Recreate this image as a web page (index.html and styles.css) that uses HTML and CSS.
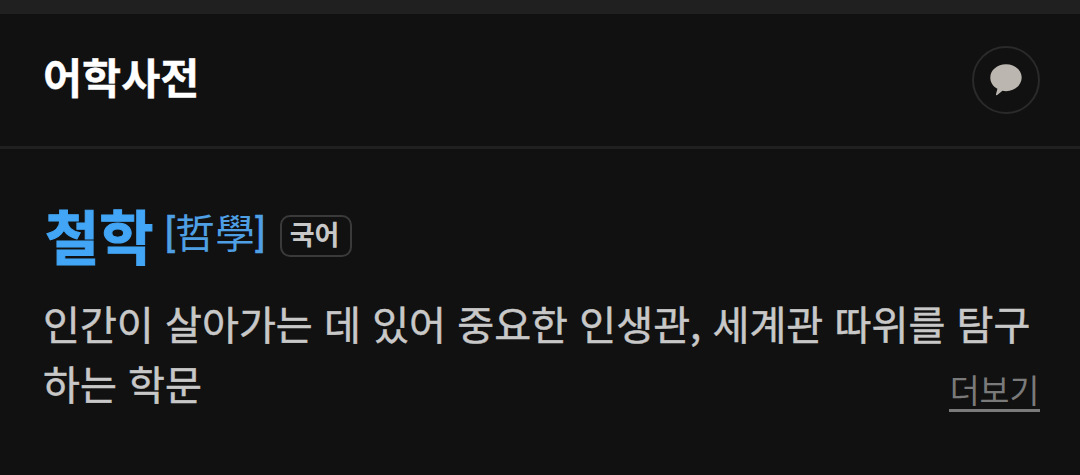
FILE: index.html
```html
<!DOCTYPE html>
<html lang="ko">
<head>
    <meta charset="UTF-8">
    <meta name="viewport" content="width=device-width, initial-scale=1.0">
    <title>어학사전</title>
    <link rel="stylesheet" href="styles.css">
</head>
<body>

    <header class="dict-header">
        <h2>어학사전</h2>
        <button class="talk-btn" aria-label="댓글">
            <svg width="34" height="34" viewBox="0 0 34 34">
                <path d="M17 1.300C8.200 1.300 1.300 7.200 1.300 14.600c0 5 2.600 8.800 7.100 11.200L7 31.300c-.2 1 .5 1.300 1.200.8l5.300-4.300c1.100.3 2.300.4 3.500.4 8.800 0 15.700-6.200 15.700-13.600S25.800 1.300 17 1.300z" fill="#bcb6b0"/>
            </svg>
        </button>
    </header>

    <main class="entry">
        <div class="word-row">
            <a class="word">철학</a>
            <span class="hanja"><span class="bracket">[</span>哲學<span class="bracket">]</span></span>
            <span class="lang">국어</span>
        </div>
        <div class="desc-row">
            <p class="meaning">인간이 살아가는 데 있어 중요한 인생관, 세계관 따위를 탐구<br>하는 학문</p>
            <a class="more">더보기</a>
        </div>
    </main>

</body>
</html>
```

FILE: styles.css
```css
* { box-sizing: border-box; }
body { margin: 0; height: 475px; overflow: hidden; background: #111; border-top: 14px solid #202020; font-family: "Noto Sans CJK KR", sans-serif; color: #c8c8c8; }
.dict-header { height: 135px; padding: 0 40px 0 43px; border-bottom: 3px solid #202020; display: flex; justify-content: space-between; align-items: center; }
.dict-header h2 { margin: 0; padding-bottom: 8px; font-size: 42.500px; line-height: 60px; font-weight: 700; color: #fff; -webkit-text-stroke: .4px; }
.talk-btn { width: 68px; height: 68px; padding: 0; border: 2px solid #2a2a2a; border-radius: 50%; background: none; display: flex; justify-content: center; align-items: center; }
.entry { padding: 47px 40px 0 43px; }
.word-row { display: flex; align-items: center; height: 80px; }
.word { padding: 0 0 3px 2px; font-size: 59px; line-height: 80px; font-weight: 700; color: #42a5f5; -webkit-text-stroke: 1px; }
.hanja { display: flex; align-items: center; margin-left: 11px; padding-bottom: 10px; font-size: 40px; line-height: 60px; color: #4e9fe4; }
.bracket { width: 10.500px; padding-top: 5px; font-family: Roboto, sans-serif; font-size: 39px; text-align: center; -webkit-text-stroke: .5px; }
.lang { margin-left: 14px; width: 72px; height: 42px; border: 2px solid #3a3a3a; border-radius: 10px; font-size: 27px; line-height: 34px; font-weight: 700; text-align: center; text-indent: -2px; }
.desc-row { margin-top: 17px; display: flex; justify-content: space-between; align-items: flex-end; }
.meaning { margin: 0; font-size: 40.150px; line-height: 60px; white-space: nowrap; -webkit-text-stroke: .5px; }
.more { margin: 0 0 1px -100px; width: 91px; font-size: 32.500px; line-height: 30px; padding-bottom: 5px; text-align: center; color: #7a7a7a; border-bottom: 3px solid #7a7a7a; }
```
